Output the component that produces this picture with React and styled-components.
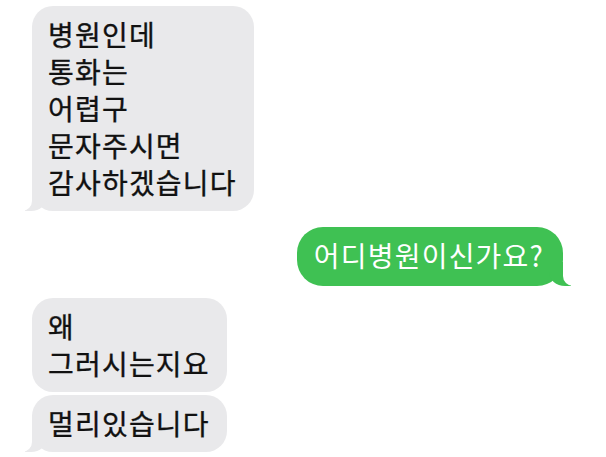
import styled, { createGlobalStyle, css } from "styled-components";

const Global = createGlobalStyle`
    html, body {
        margin: 0;
        padding: 0;
        background: #ffffff;
    }
    body {
        font-family: "Noto Sans CJK KR", "Noto Sans", sans-serif;
    }
`;

const Thread = styled.div`
    width: 606px;
    height: 457px;
    overflow: hidden;
    display: flex;
    flex-direction: column;
    padding-top: 6px;
    box-sizing: border-box;
`;

const Row = styled.div`
    display: flex;
    justify-content: ${(p) => (p.mine ? "flex-end" : "flex-start")};
    padding: ${(p) => (p.mine ? "0 43px 0 0" : "0 0 0 32px")};
    margin-top: ${(p) => p.gap || 0}px;
`;

const Bubble = styled.div`
    position: relative;
    font-size: 28px;
    letter-spacing: 1.2px;
    line-height: 37px;
    white-space: pre-line;
    background: ${(p) => (p.mine ? "#3fc153" : "#e9e9eb")};
    color: ${(p) => (p.mine ? "#ffffff" : "#111111")};
    -webkit-text-stroke: ${(p) => (p.mine ? "0" : "0.35px")} currentColor;
    padding: ${(p) => (p.mine ? "10px 19px 12px 17px" : "10px 17px 10px 16px")};
    border-radius: ${(p) => (p.mine ? "26px" : "21px")};

    ${(p) =>
        p.tail &&
        !p.mine &&
        css`
            &::before {
                content: "";
                position: absolute;
                bottom: 0;
                left: -7px;
                width: 22px;
                height: 24px;
                background: #e9e9eb;
                border-bottom-right-radius: 16px 14px;
            }
            &::after {
                content: "";
                position: absolute;
                bottom: 0;
                left: -24px;
                width: 24px;
                height: 26px;
                background: #ffffff;
                border-bottom-right-radius: 10px;
            }
        `}

    ${(p) =>
        p.tail &&
        p.mine &&
        css`
            &::before {
                content: "";
                position: absolute;
                bottom: 0;
                right: -8px;
                width: 22px;
                height: 24px;
                background: #3fc153;
                border-bottom-left-radius: 16px 14px;
            }
            &::after {
                content: "";
                position: absolute;
                bottom: 0;
                right: -24px;
                width: 24px;
                height: 26px;
                background: #ffffff;
                border-bottom-left-radius: 10px;
            }
        `}
`;

const Text = styled.span`
    position: relative;
    z-index: 1;
`;

const messages = [
    { text: "병원인데\n통화는\n어렵구\n문자주시면\n감사하겠습니다", tail: true, gap: 0 },
    { text: "어디병원이신가요?", mine: true, tail: true, gap: 16 },
    { text: "왜\n그러시는지요", gap: 12 },
    { text: "멀리있습니다", tail: true, gap: 3 },
];

const App = () => {
    return (
        <>
            <Global />
            <Thread>
                {messages.map((m, i) => (
                    <Row key={i} mine={m.mine} gap={m.gap}>
                        <Bubble mine={m.mine} tail={m.tail}>
                            <Text>{m.text}</Text>
                        </Bubble>
                    </Row>
                ))}
            </Thread>
        </>
    );
};

export default App;
